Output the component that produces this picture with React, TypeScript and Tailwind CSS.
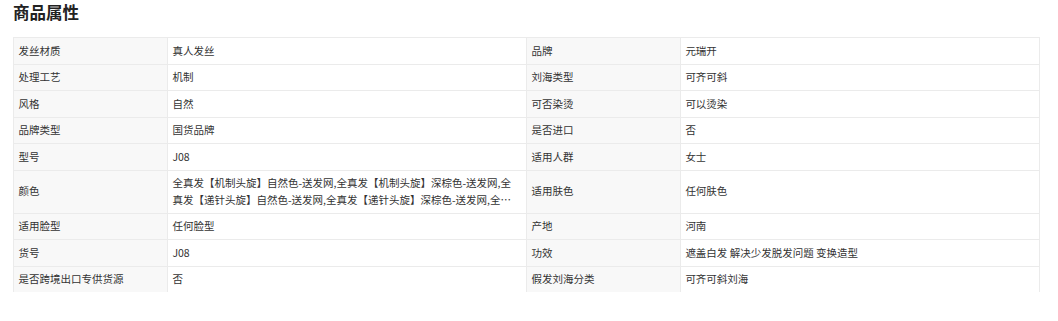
import React from "react";

const ROWS: [string, string, string, string][] = [
  ["发丝材质", "真人发丝", "品牌", "元瑞开"],
  ["处理工艺", "机制", "刘海类型", "可齐可斜"],
  ["风格", "自然", "可否染烫", "可以烫染"],
  ["品牌类型", "国货品牌", "是否进口", "否"],
  ["型号", "J08", "适用人群", "女士"],
  [
    "颜色",
    "全真发【机制头旋】自然色-送发网,全真发【机制头旋】深棕色-送发网,全真发【递针头旋】自然色-送发网,全真发【递针头旋】深棕色-送发网,全真发【递针头旋】黑色-送发网",
    "适用肤色",
    "任何肤色",
  ],
  ["适用脸型", "任何脸型", "产地", "河南"],
  ["货号", "J08", "功效", "遮盖白发 解决少发脱发问题 变换造型"],
  ["是否跨境出口专供货源", "否", "假发刘海分类", "可齐可斜刘海"],
];

const font = { fontFamily: '"Noto Sans CJK SC", "Noto Sans", sans-serif' };

export default function App() {
  return (
    <div className="bg-white min-h-[321px] px-[13px] text-[#333]" style={font}>
      <h2 className="text-[16.5px] leading-[24px] font-bold text-[#222]">商品属性</h2>

      <table className="mt-[13px] w-[1027px] table-fixed border-collapse text-[10.5px] leading-[16.5px]">
        <colgroup>
          <col className="w-[15%]" />
          <col className="w-[35%]" />
          <col className="w-[15%]" />
          <col className="w-[35%]" />
        </colgroup>
        <tbody>
          {ROWS.map(([k1, v1, k2, v2]) => (
            <tr key={k1}>
              <td className="border-t border-x border-[#ebebeb] bg-[#f8f8f8] px-[4.5px] py-[4.5px] align-middle">{k1}</td>
              <td className="border-t border-x border-[#ebebeb] bg-white px-[4.5px] py-[4.5px] align-middle">
                <div className="line-clamp-2 break-all">{v1}</div>
              </td>
              <td className="border-t border-x border-[#ebebeb] bg-[#f8f8f8] px-[4.5px] py-[4.5px] align-middle">{k2}</td>
              <td className="border-t border-x border-[#ebebeb] bg-white px-[4.5px] py-[4.5px] align-middle">{v2}</td>
            </tr>
          ))}
        </tbody>
      </table>

      <h2 className="mt-[26px] text-[16.5px] leading-[24px] font-bold text-[#222]">商品详情</h2>
    </div>
  );
}
